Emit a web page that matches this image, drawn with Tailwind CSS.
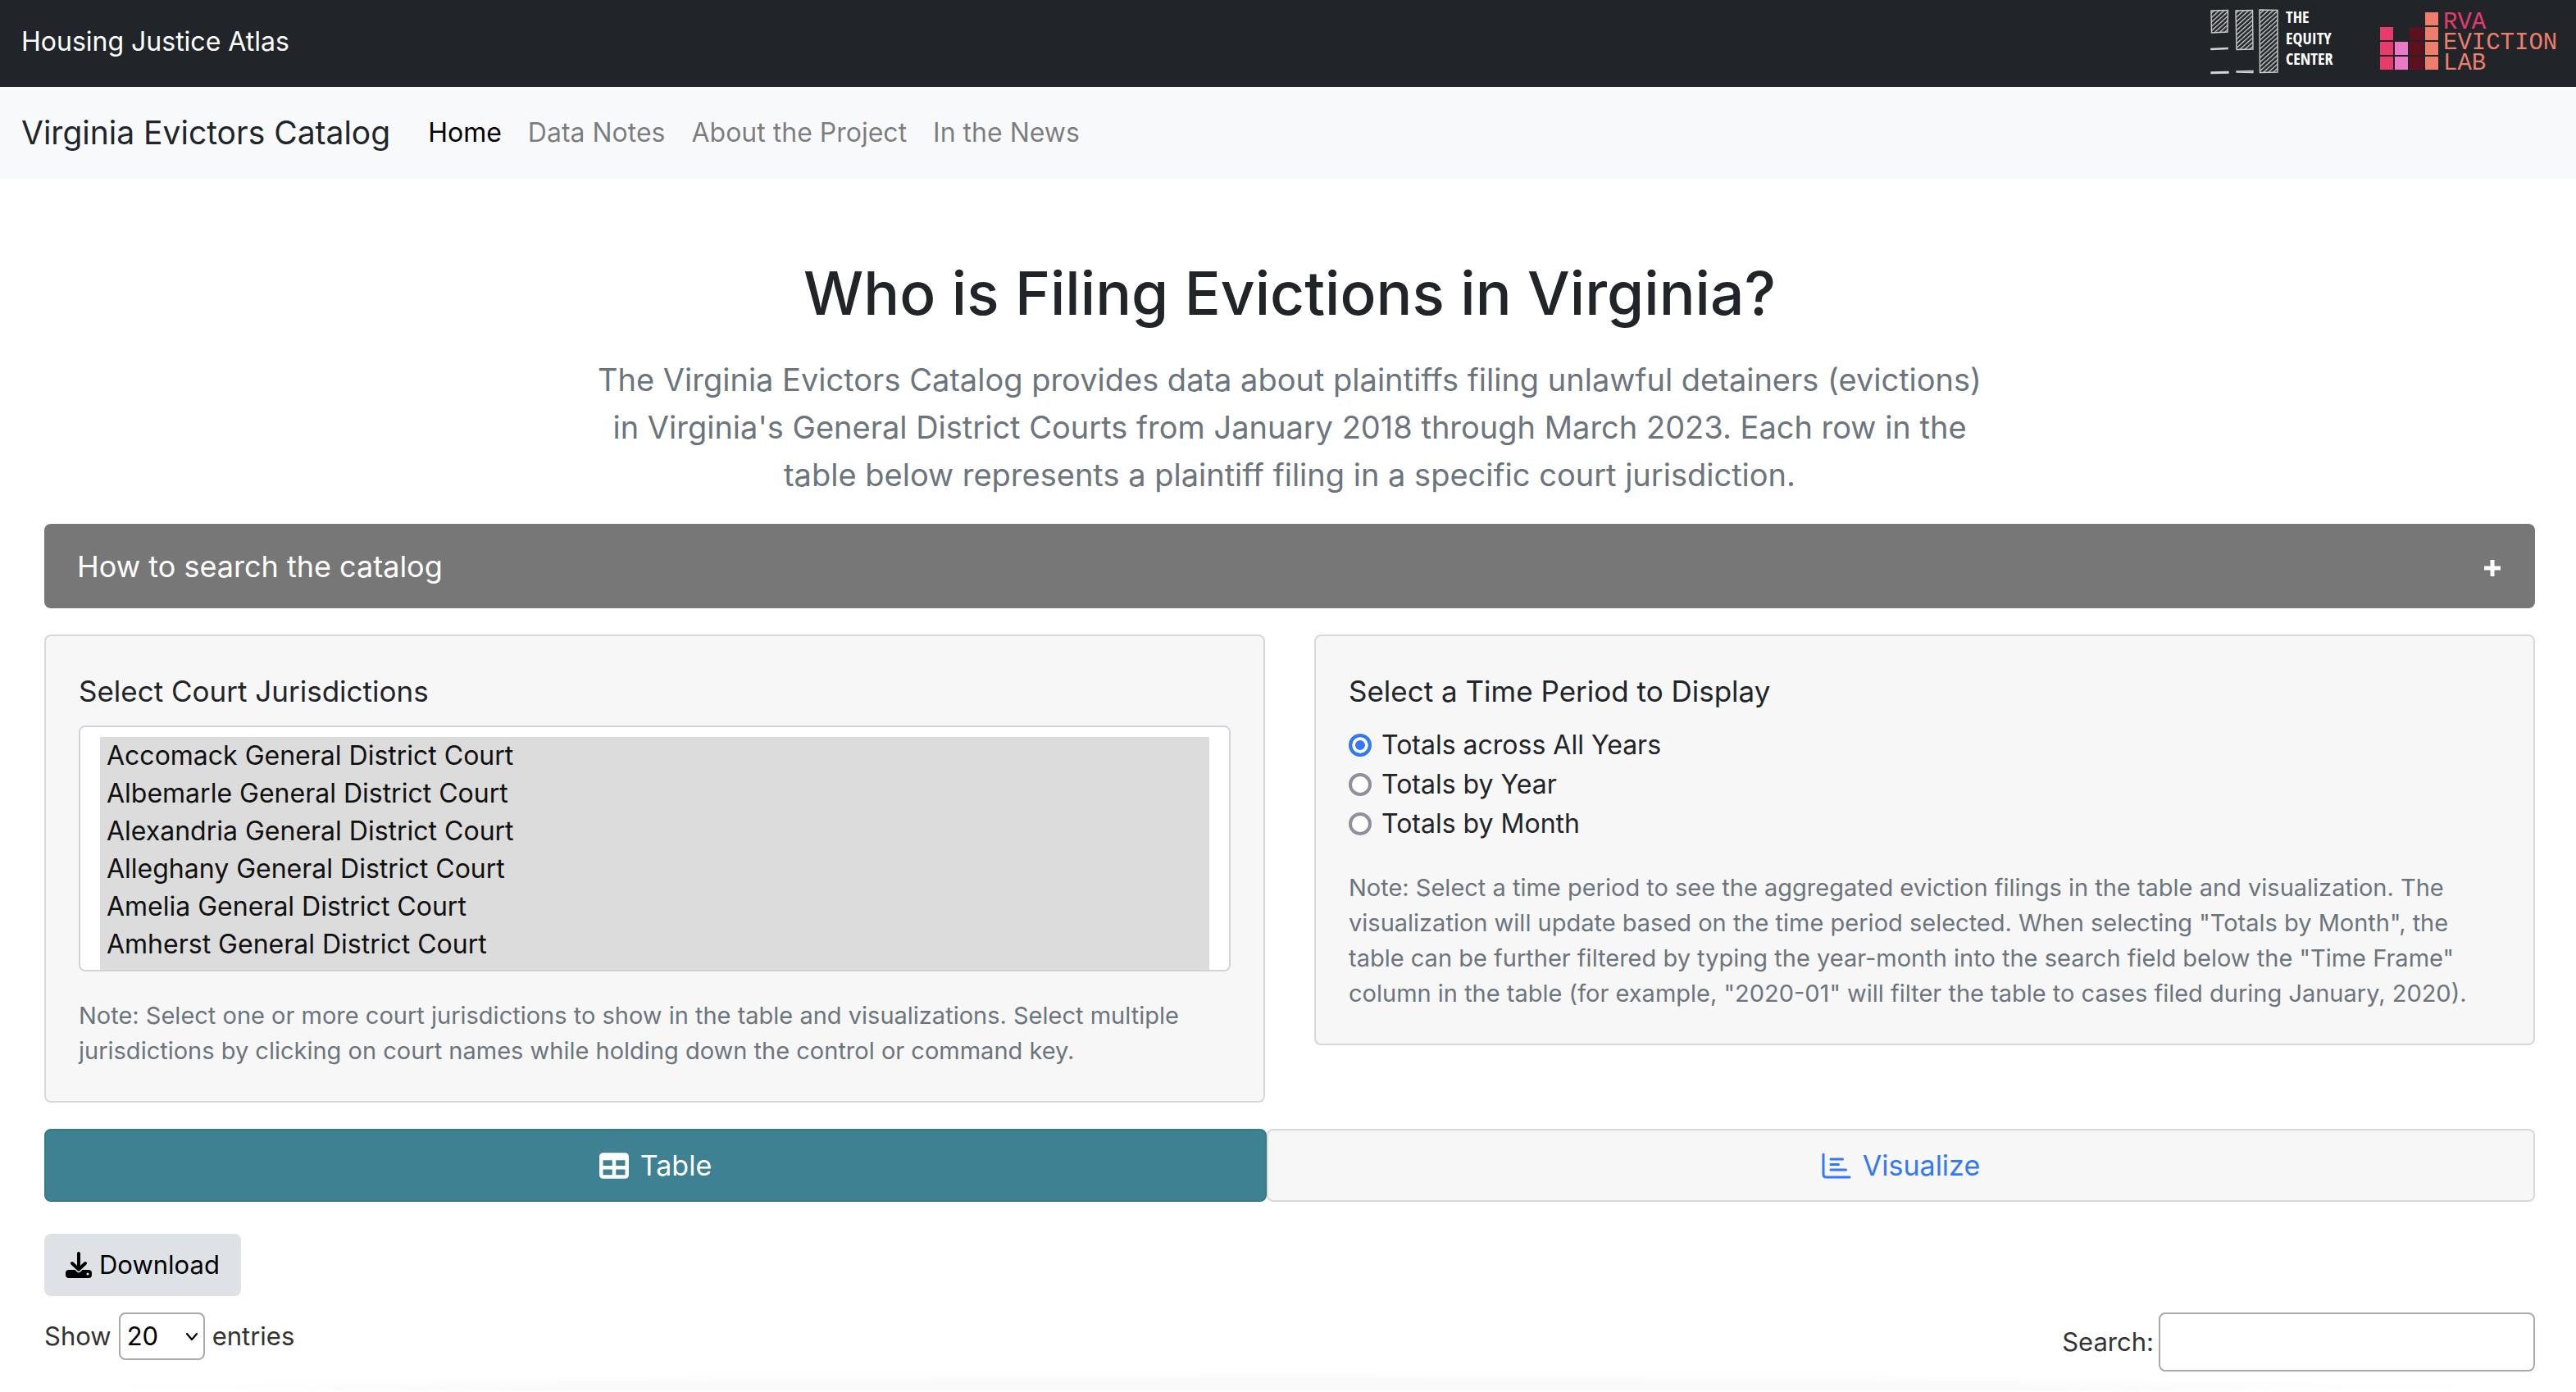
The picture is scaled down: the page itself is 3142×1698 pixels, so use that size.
<!DOCTYPE html>
<html lang="en">
<head>
<meta charset="utf-8">
<meta name="viewport" content="width=device-width, initial-scale=1">
<title>Virginia Evictors Catalog</title>
<script src="https://cdn.jsdelivr.net/npm/@tailwindcss/browser@4"></script>
</head>
<body class="bg-white font-['Inter',sans-serif] text-[32px] leading-[48px] text-[#212529]">

<header class="flex h-[106px] items-center justify-between bg-[#212529] pr-5 pb-1 pl-[26px]">
  <a href="#" class="text-white">Housing Justice Atlas</a>
  <div class="flex items-center gap-[59px]">
    <a href="#" aria-label="The Equity Center">
      <svg class="h-20 w-[148px] overflow-visible" viewBox="0 0 148 80">
        <defs>
          <pattern id="hatch" width="4" height="4" patternUnits="userSpaceOnUse" patternTransform="rotate(48)">
            <rect width="1.3" height="4" fill="#d4d5d6"/>
          </pattern>
        </defs>
        <g fill="url(#hatch)" stroke="#c9cacb" stroke-width="1.4">
          <path d="M1 2 21.500 1.500 21 28 1.500 29z"/>
          <path d="M31 2 51.500 1.500 52 49 32 49.500z"/>
          <path d="M60 1 82 1.500 82 77 60.500 77.500z"/>
        </g>
        <g fill="none" stroke="#d4d5d6" stroke-width="1.3">
          <path d="M0 48.500 22 47.500M.5 49.500 22 48.500"/>
          <path d="M1 77 22 76.500V78L1 78.500zM32 76 52 75.500V77.500L32 77z"/>
        </g>
        <g class="fill-white font-['Open_Sans_Condensed','Roboto_Condensed',sans-serif] text-[20px] font-light">
          <text x="92" y="17">THE</text>
          <text x="92" y="43">EQUITY</text>
          <text x="92" y="68">CENTER</text>
        </g>
      </svg>
    </a>
    <a href="#" aria-label="RVA Eviction Lab">
      <svg class="h-20 w-[219px] overflow-visible" viewBox="0 0 219 80">
        <g fill="#e73b6a">
          <path d="M0 22h16v16H0zM0 40h16v16H0zM0 58h16v16H0z"/>
        </g>
        <path fill="#ec78c8" d="M18 40h16v16H18zM18 58h16v16H18z"/>
        <path fill="#5d101d" d="M36 22h17v16H36zM36 40h17v16H36zM36 58h17v16H36z"/>
        <path fill="#ee7e6c" d="M55 4h16v16H55zM55 22h16v16H55zM55 40h16v16H55zM55 58h16v16H55z"/>
        <g class="font-['Liberation_Mono',monospace] text-[29px]">
          <text x="77" y="24" fill="#e73b6a">RVA</text>
          <text x="77" y="49" fill="#ee7e6c">EVICTION</text>
          <text x="77" y="74" fill="#ee7e6c">LAB</text>
        </g>
      </svg>
    </a>
  </div>
</header>

<nav class="flex h-28 items-center gap-8 bg-[#f8f9fb] px-[26px] text-black/50">
  <a href="#" class="mr-[14px] text-[39px] text-[#212529]">Virginia Evictors Catalog</a>
  <a href="#" class="text-black">Home</a>
  <a href="#">Data Notes</a>
  <a href="#">About the Project</a>
  <a href="#">In the News</a>
</nav>

<main class="pt-24 pr-[50px] pl-[54px]">
  <h1 class="text-center text-[73px] leading-[88px] font-medium">Who is Filing Evictions in Virginia?</h1>
  <p class="mx-auto mt-8 max-w-[1700px] text-center text-[38px] leading-[58px] text-[#6c757d]">The Virginia Evictors Catalog provides data about plaintiffs filing unlawful detainers (evictions) in Virginia's General District Courts from January 2018 through March 2023. Each row in the table below represents a plaintiff filing in a specific court jurisdiction.</p>

  <button type="button" class="mt-[31px] flex h-[103px] w-full items-center justify-between rounded-lg bg-[#777] px-10 text-[36px] text-white">
    How to search the catalog
    <svg class="mt-1 size-6" viewBox="0 0 24 24" fill="none" stroke="currentColor" stroke-width="5" stroke-linecap="square"><path d="M12 4.500v15M4.500 12h15"/></svg>
  </button>

  <div class="mt-8 grid grid-cols-2 items-start gap-[60px]">
    <section class="rounded-lg border-2 border-[#d8d8d8] bg-[#f7f7f7] p-10">
      <label for="courts" class="mb-[15px] block text-[35px] leading-[54px]">Select Court Jurisdictions</label>
      <select id="courts" multiple class="block h-[300px] w-full rounded-lg border-2 border-[#ced4da] bg-white px-6 py-3 [scrollbar-width:none] *:h-[46px] *:bg-[linear-gradient(#dcdcdc,#dcdcdc)] *:px-2 *:pt-[3px] *:pb-0">
        <option selected>Accomack General District Court</option>
        <option selected>Albemarle General District Court</option>
        <option selected>Alexandria General District Court</option>
        <option selected>Alleghany General District Court</option>
        <option selected>Amelia General District Court</option>
        <option selected>Amherst General District Court</option>
        <option selected>Appomattox General District Court</option>
        <option selected>Arlington General District Court</option>
      </select>
      <p class="mt-8 text-[29px] leading-[43px] text-[#6c757d]">Note: Select one or more court jurisdictions to show in the table and visualizations. Select multiple jurisdictions by clicking on court names while holding down the control or command key.</p>
    </section>

    <section class="rounded-lg border-2 border-[#d8d8d8] bg-[#f7f7f7] p-10">
      <fieldset>
        <legend class="mb-[15px] text-[35px] leading-[54px]">Select a Time Period to Display</legend>
        <label class="flex items-center gap-3"><input type="radio" name="period" checked class="size-7 appearance-none rounded-full border-4 border-[#8f8f9d] bg-white checked:border-[#3478f6] checked:bg-[#3478f6] checked:shadow-[inset_0_0_0_4px_white]">Totals across All Years</label>
        <label class="flex items-center gap-3"><input type="radio" name="period" class="size-7 appearance-none rounded-full border-4 border-[#8f8f9d] bg-white checked:border-[#3478f6] checked:bg-[#3478f6] checked:shadow-[inset_0_0_0_4px_white]">Totals by Year</label>
        <label class="flex items-center gap-3"><input type="radio" name="period" class="size-7 appearance-none rounded-full border-4 border-[#8f8f9d] bg-white checked:border-[#3478f6] checked:bg-[#3478f6] checked:shadow-[inset_0_0_0_4px_white]">Totals by Month</label>
      </fieldset>
      <p class="mt-8 text-[29px] leading-[43px] text-[#6c757d]">Note: Select a time period to see the aggregated eviction filings in the table and visualization. The visualization will update based on the time period selected. When selecting "Totals by Month", the table can be further filtered by typing the year-month into the search field below the "Time Frame" column in the table (for example, "2020-01" will filter the table to cases filed during January, 2020).</p>
    </section>
  </div>

  <div class="mt-8 flex text-[34px]">
    <button type="button" class="flex h-[89px] flex-auto items-center justify-center gap-[14px] rounded-lg border-2 border-[#377a8b] bg-[#3d8193] text-white">
      <svg class="h-8 w-9" viewBox="0 0 512 448" fill="currentColor"><path fill-rule="evenodd" d="M64 0H448a64 64 0 0 1 64 64V384a64 64 0 0 1-64 64H64a64 64 0 0 1-64-64V64A64 64 0 0 1 64 0zM64 128v96H224V128zM288 128v96H448V128zM64 288v96H224V288zM288 288v96H448V288z"/></svg>
      Table
    </button>
    <button type="button" class="flex h-[89px] flex-auto items-center justify-center gap-[14px] rounded-lg border-2 border-[#d8d8d8] bg-[#f7f7f7] text-[#3478f6]">
      <svg class="h-8 w-9" viewBox="0 0 36 32" fill="none" stroke="currentColor" stroke-width="3" stroke-linecap="round" stroke-linejoin="round"><path d="M2 2V26.500Q2 30 5.500 30H34M11 8H25.500M11 14.500H20.500M11 21H29.500"/></svg>
      Visualize
    </button>
  </div>

  <button type="button" class="mt-[39px] flex h-[76px] items-center gap-[9px] rounded-lg bg-[#dee2e6] px-[26px] text-[31px] text-black">
    <svg class="size-8" viewBox="0 0 32 32"><rect y="22" width="32" height="10" rx="4"/><path d="M8 14 16 22 24 14" fill="none" stroke="#dee2e6" stroke-width="6.500" stroke-linecap="round" stroke-linejoin="round"/><path d="M16 2V21M8 14 16 21.500 24 14" fill="none" stroke="#000" stroke-width="4" stroke-linecap="round" stroke-linejoin="round"/><circle cx="27" cy="27" r="1.600" fill="#dee2e6"/></svg>
    Download
  </button>

  <div class="mt-5 flex items-start justify-between text-[31px] text-[#333]">
    <label class="flex items-center gap-[9px]">Show
      <span class="relative">
        <select class="block h-[58px] w-[105px] appearance-none rounded-lg border-2 border-[#aaa] bg-white pl-2 text-black">
          <option>10</option>
          <option selected>20</option>
          <option>50</option>
          <option>100</option>
        </select>
        <svg class="pointer-events-none absolute top-6 right-2 h-3 w-4" viewBox="0 0 16 12" fill="none" stroke="#000" stroke-width="2.200" stroke-linecap="round" stroke-linejoin="round"><path d="M2 2 8 9 14 2"/></svg>
      </span>
      entries
    </label>
    <label class="flex items-center gap-[6px]">Search:
      <input type="search" class="h-[72px] w-[459px] rounded-lg border-2 border-[#aaa] bg-white px-3">
    </label>
  </div>
  <div class="h-6 bg-[radial-gradient(ellipse_50%_100%_at_50%_100%,#fafafa_60%,#fff)]"></div>
</main>
</body>
</html>
